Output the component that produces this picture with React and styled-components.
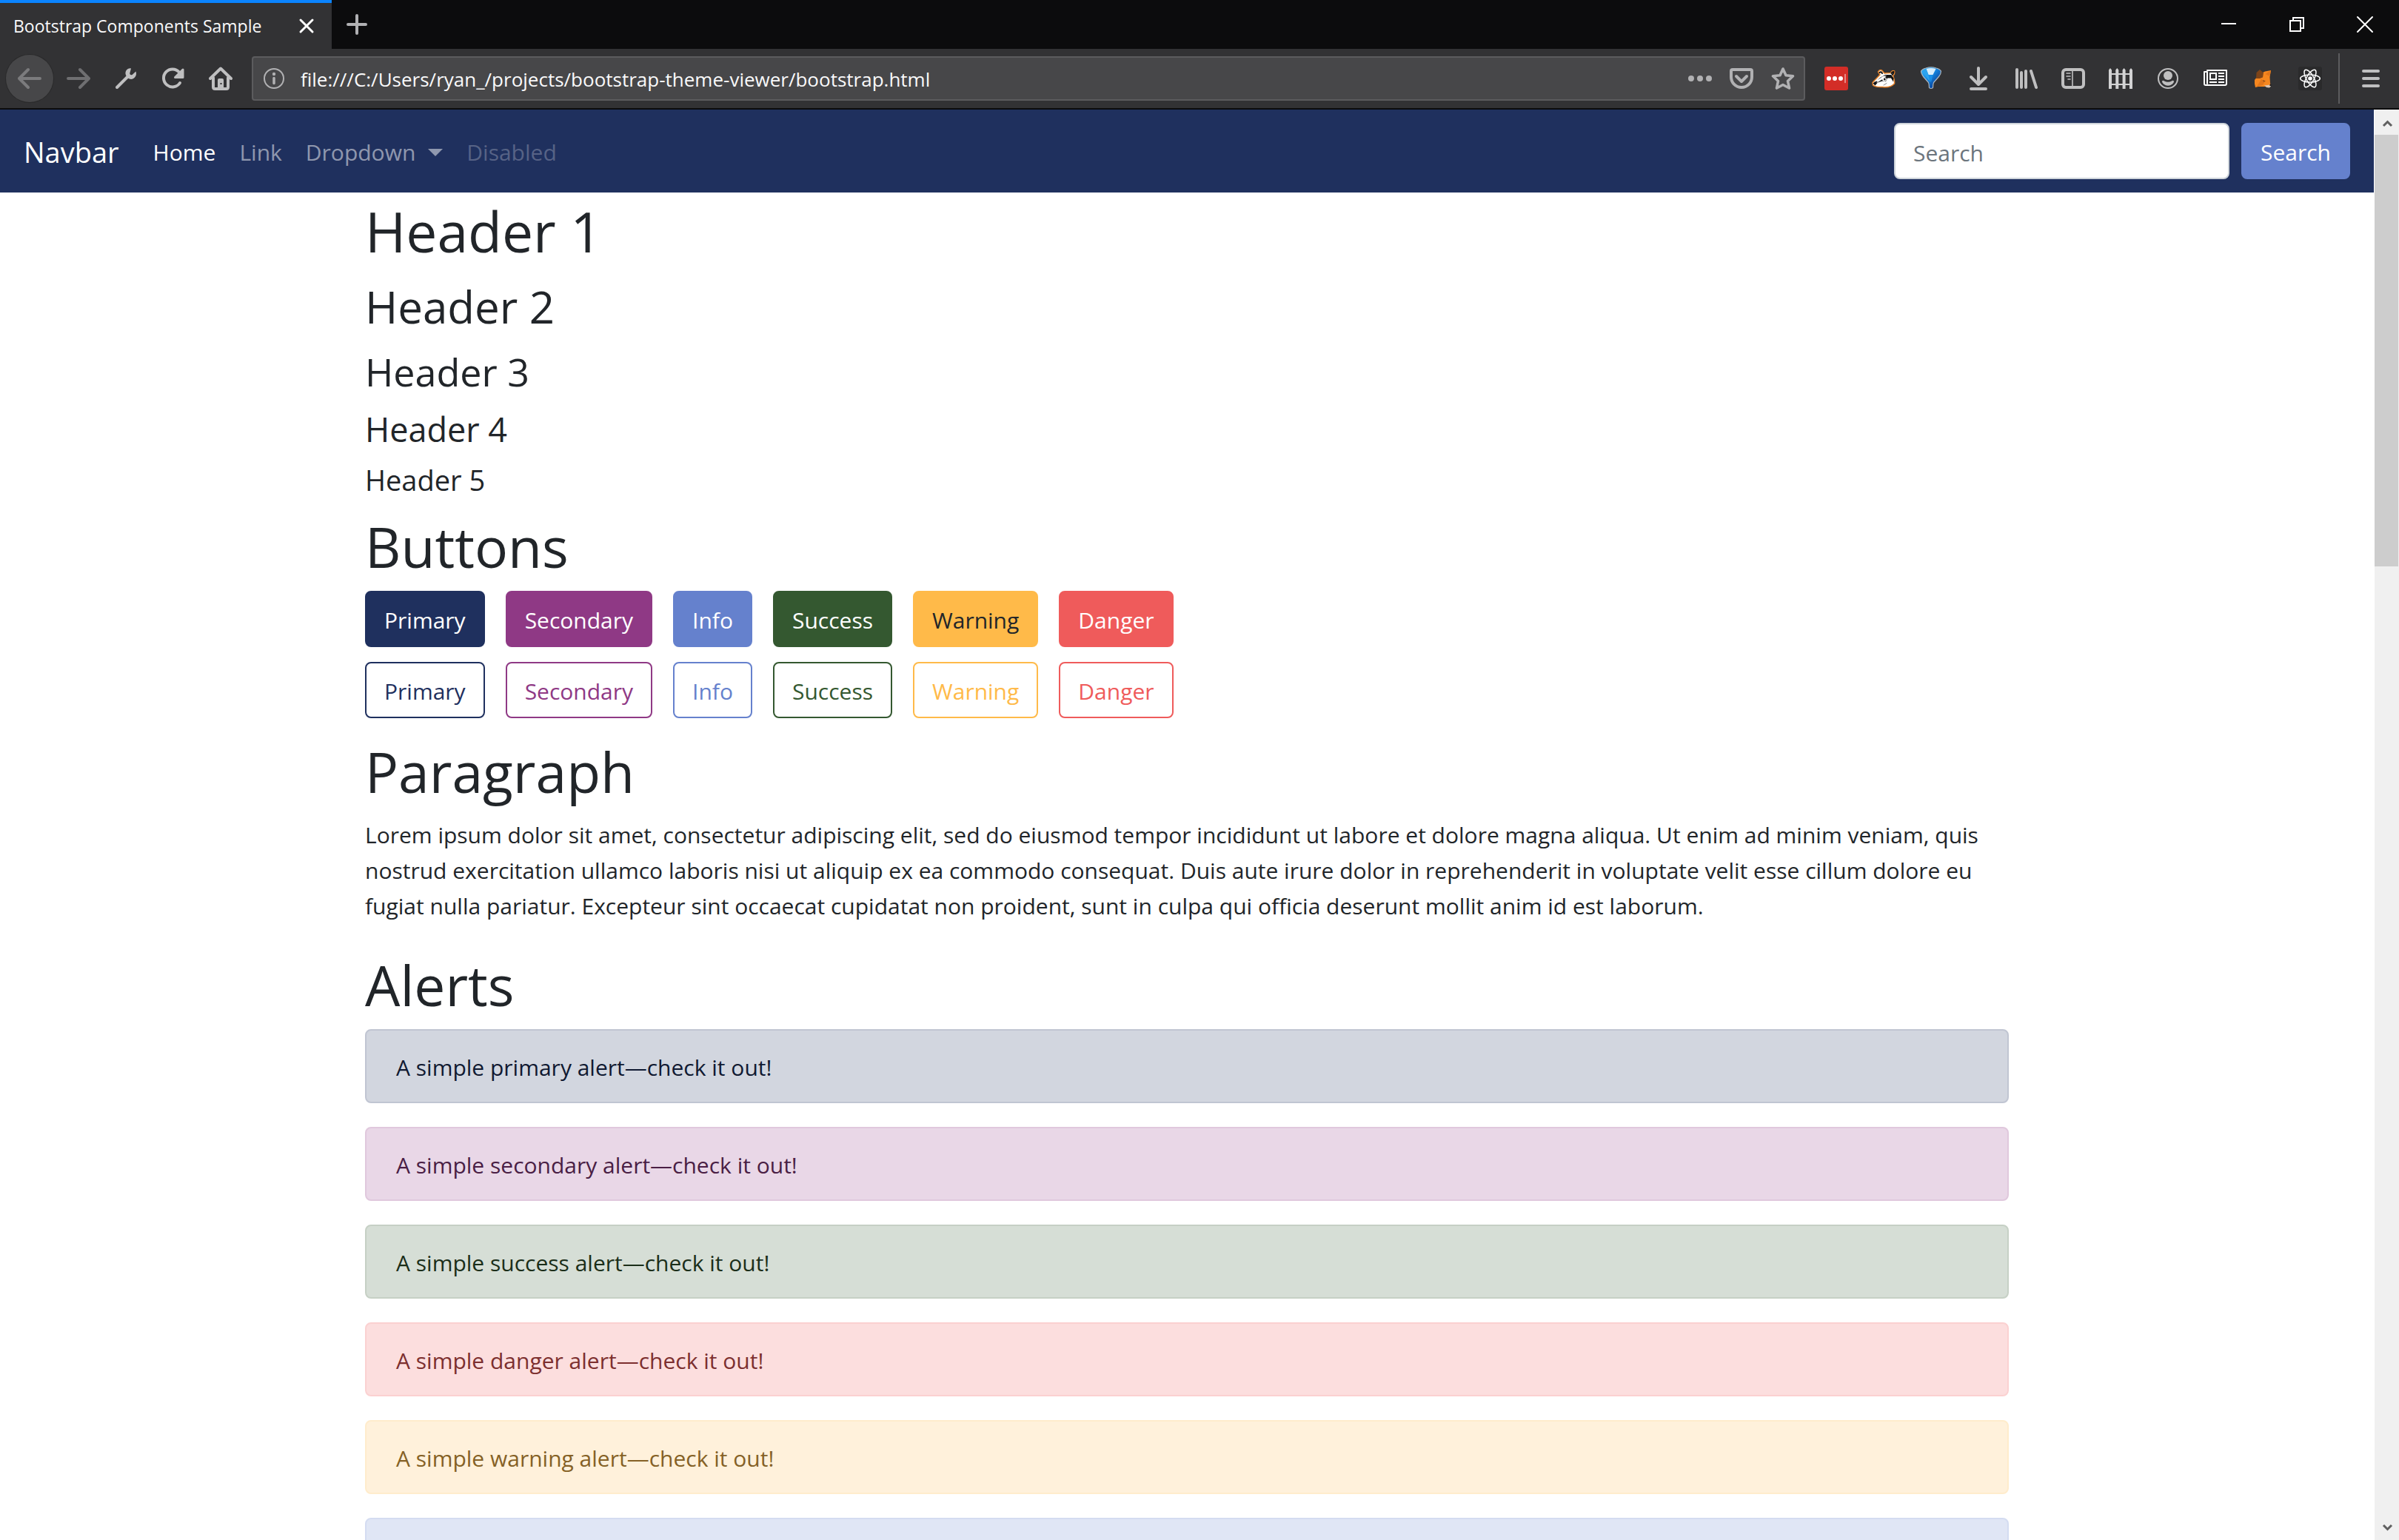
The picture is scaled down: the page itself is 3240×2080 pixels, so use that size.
import React from 'react';
import styled, { createGlobalStyle } from 'styled-components';

const FONT = '"Open Sans", "Noto Sans", sans-serif';

const theme = {
  primary: { color: '#1f305e', text: '#ffffff', alertBg: '#d2d6df', alertBorder: '#c0c5d2', alertText: '#101931' },
  secondary: { color: '#8f3985', text: '#ffffff', alertBg: '#e9d7e7', alertBorder: '#e0c8dd', alertText: '#4a1e45' },
  info: { color: '#6581cd', text: '#ffffff', alertBg: '#e0e6f5', alertBorder: '#d4dcf1', alertText: '#35436b' },
  success: { color: '#345830', text: '#ffffff', alertBg: '#d6ded6', alertBorder: '#c6d0c5', alertText: '#1b2e19' },
  warning: { color: '#ffba49', text: '#212529', alertBg: '#fff1db', alertBorder: '#ffeccc', alertText: '#856126' },
  danger: { color: '#ef5b5b', text: '#ffffff', alertBg: '#fcdede', alertBorder: '#fbd1d1', alertText: '#7c2f2f' },
};

const GlobalStyle = createGlobalStyle`
  *, *::before, *::after { box-sizing: border-box; }
  body {
    margin: 0;
    font-family: ${FONT};
    font-size: 30px;
    line-height: 48px;
    color: #212529;
    background: #fff;
  }
  button, input { font-family: inherit; margin: 0; }
`;

/* ---------- browser window ---------- */

const BrowserWindow = styled.div`
  display: flex;
  flex-direction: column;
  height: 100vh;
  overflow: hidden;
`;

const TabStrip = styled.header`
  display: flex;
  align-items: stretch;
  height: 66px;
  flex: none;
  background: #0c0c0d;
`;

const Tab = styled.div`
  display: flex;
  align-items: center;
  justify-content: space-between;
  width: 448px;
  padding: 0 18px;
  border-top: 4px solid #0a84ff;
  background: #323234;
  color: #f9f9fa;
  font-size: 23px;
  line-height: 32px;
  white-space: nowrap;
`;

const ChromeButton = styled.button`
  display: flex;
  align-items: center;
  justify-content: center;
  flex: none;
  width: ${(p) => p.$width || 64}px;
  padding: 0;
  border: 0;
  background: transparent;
  color: ${(p) => p.$color || '#bfbfc0'};
`;

const WindowControls = styled.div`
  display: flex;
  margin-left: auto;
`;

const Toolbar = styled.div`
  display: flex;
  align-items: stretch;
  flex: none;
  height: 82px;
  padding: 0 6px 0 8px;
  background: #323234;
  border-bottom: 2px solid #0c0c0d;
`;

const BackButton = styled(ChromeButton)`
  align-self: center;
  height: 64px;
  margin-right: 2px;
  border-radius: 50%;
  background: #474749;
  box-shadow: 0 0 0 1px #2a2a2b;
`;

const UrlBar = styled.div`
  display: flex;
  align-items: stretch;
  flex: 1;
  height: 60px;
  margin: 10px 10px 0;
  border: 2px solid #5c5c5e;
  border-radius: 4px;
  background: #474749;
`;

const UrlInput = styled.input`
  flex: 1;
  min-width: 0;
  padding: 2px 8px 0;
  border: 0;
  background: transparent;
  color: #f9f9fa;
  font-size: 26px;
  line-height: 40px;
`;

const Separator = styled.div`
  width: 2px;
  height: 68px;
  margin: 6px 10px 0 6px;
  background: #5c5c5e;
`;

const Viewport = styled.div`
  display: flex;
  flex: 1;
  min-height: 0;
`;

const Page = styled.div`
  flex: 1;
  min-width: 0;
  overflow: hidden;
  background: #fff;
`;

const ScrollTrack = styled.div`
  display: flex;
  flex-direction: column;
  flex: none;
  width: 34px;
  border-left: 1px solid #fff;
  background: #f0f0f0;
`;

const ScrollButton = styled(ChromeButton)`
  width: 100%;
  height: 34px;
  color: #606060;
`;

const ScrollSpace = styled.div`
  display: grid;
  grid-template-rows: 5fr 11fr;
  flex: 1;
  padding-right: 1px;
`;

const ScrollThumb = styled.div`
  background: #cdcdcd;
`;

/* ---------- page ---------- */

const Navbar = styled.nav`
  display: flex;
  align-items: center;
  height: 112px;
  padding: 0 32px;
  background: ${theme.primary.color};
`;

const Brand = styled.a`
  margin-right: 30px;
  padding-top: 2px;
  color: #fff;
  font-size: 38px;
  line-height: 60px;
  text-decoration: none;
`;

const NavList = styled.ul`
  display: flex;
  margin: 0;
  padding: 4px 0 0;
  list-style: none;
`;

const linkOpacity = { active: 1, normal: 0.5, disabled: 0.25 };

const NavLink = styled.a`
  display: flex;
  align-items: center;
  padding: 16px;
  color: rgba(255, 255, 255, ${(p) => linkOpacity[p.$state]});
  text-decoration: none;
`;

const Caret = styled.span`
  margin-left: 17px;
  border: 10px solid transparent;
  border-top-color: currentColor;
  border-bottom: 0;
`;

const SearchForm = styled.form`
  display: flex;
  gap: 16px;
  margin-left: auto;
`;

const SearchInput = styled.input`
  width: 453px;
  height: 76px;
  padding: 4px 24px 0;
  border: 2px solid #ced4da;
  border-radius: 8px;
  background: #fff;
  color: #495057;
  font-size: 30px;
  line-height: 48px;
  &::placeholder { color: #6c757d; opacity: 1; }
`;

const Container = styled.main`
  max-width: 2280px;
  margin: 0 auto;
  padding: 0 30px;
`;

const headingSizes = {
  1: { size: 75, line: 104, gap: 8 },
  2: { size: 60, line: 85, gap: 8 },
  3: { size: 52, line: 73, gap: 10 },
  4: { size: 45, line: 64, gap: 10 },
  5: { size: 38, line: 52, gap: 12 },
};

const Heading = styled.h1`
  margin: 0 0 ${(p) => headingSizes[p.$level].gap}px;
  font-size: ${(p) => headingSizes[p.$level].size}px;
  line-height: ${(p) => headingSizes[p.$level].line}px;
  font-weight: 400;
`;

const ButtonRow = styled.div`
  display: flex;
  gap: 28px;
  margin-bottom: 20px;
`;

const Button = styled.button`
  padding: 14px 24px 10px;
  border: 2px solid ${(p) => theme[p.$variant].color};
  border-radius: 8px;
  background: ${(p) => (p.$outline ? 'transparent' : theme[p.$variant].color)};
  color: ${(p) => (p.$outline ? theme[p.$variant].color : theme[p.$variant].text)};
  font-size: 30px;
  line-height: 48px;
`;

const Paragraph = styled.p`
  margin: 0 0 30px;
  padding-top: 2px;
`;

const Alert = styled.div`
  min-height: 100px;
  margin-bottom: 32px;
  padding: 26px 40px 22px;
  border: 2px solid ${(p) => theme[p.$variant].alertBorder};
  border-radius: 8px;
  background: ${(p) => theme[p.$variant].alertBg};
  color: ${(p) => theme[p.$variant].alertText};
`;

/* ---------- icons ---------- */

const Icon = ({ children, size = 32 }) => (
  <svg width={size} height={size} viewBox="0 0 32 32" fill="none" stroke="currentColor"
    strokeWidth="4" strokeLinecap="round" strokeLinejoin="round" aria-hidden="true">
    {children}
  </svg>
);

const TabCloseIcon = () => (
  <Icon><path d="M8 8l16 16M24 8L8 24" strokeWidth="3" /></Icon>
);
const PlusIcon = () => (
  <Icon><path d="M16 4v24M4 16h24" /></Icon>
);
const MinimizeIcon = () => (
  <Icon><path d="M6 15h20" strokeWidth="2" strokeLinecap="butt" /></Icon>
);
const RestoreIcon = () => (
  <Icon><path d="M7 11h14v14H7zM11 11V7h14v14h-4" strokeWidth="2" strokeLinecap="butt" strokeLinejoin="miter" /></Icon>
);
const CloseIcon = () => (
  <Icon><path d="M6 6l20 20M26 6L6 26" strokeWidth="2" /></Icon>
);
const BackIcon = () => (
  <Icon><path d="M2 16h28M14 4L2 16l12 12" /></Icon>
);
const ForwardIcon = () => (
  <Icon><path d="M2 16h28M18 4l12 12-12 12" /></Icon>
);
const WrenchIcon = () => (
  <Icon>
    <path d="M4 28L18 14" />
    <path d="M23 2.5c-5-1-9 4-7 9 2 6 9 7 12 3 2-2 2.500-5 1.500-8l-5 4.500c-2 1-4-1-3-3z" fill="currentColor" stroke="none" />
  </Icon>
);
const ReloadIcon = () => (
  <Icon>
    <path d="M25 22a12 12 0 1 1-1-14.500" />
    <path d="M29 4v10.500H18.500z" fill="currentColor" strokeWidth="3" />
  </Icon>
);
const HomeIcon = () => (
  <Icon>
    <path d="M2 16L16 2.500 30 16M6 15v12.500q0 2.500 2.500 2.500h15q2.500 0 2.500-2.500V15" />
    <path d="M12 31V18q0-2 2-2h4q2 0 2 2v13z" fill="currentColor" stroke="none" />
    <rect x="15.500" y="22" width="2" height="2" fill="#323234" stroke="none" />
  </Icon>
);
const InfoIcon = () => (
  <Icon>
    <circle cx="16" cy="16" r="13" strokeWidth="2" />
    <circle cx="16" cy="10" r="2.200" fill="currentColor" stroke="none" />
    <path d="M16 15.500v7" strokeWidth="3.500" />
  </Icon>
);
const DotsIcon = () => (
  <Icon>
    <g fill="currentColor" stroke="none">
      <circle cx="4" cy="16" r="4" /><circle cx="16" cy="16" r="4" /><circle cx="28" cy="16" r="4" />
    </g>
  </Icon>
);
const PocketIcon = () => (
  <Icon><path d="M4 4h24a2 2 0 0 1 2 2v8a14 14 0 0 1-28 0V6a2 2 0 0 1 2-2zM9 13l7 7 7-7" /></Icon>
);
const StarIcon = () => (
  <Icon><path d="M16 3l4 8.800 9.500 1L22.500 19.500l2 9.500L16 24.500 7.500 29l2-9.500L2.500 12.800l9.500-1z" strokeWidth="3.600" /></Icon>
);
const PasswordIcon = () => (
  <Icon>
    <rect width="32" height="32" rx="3" fill="#d32d27" stroke="none" />
    <g fill="#fff" stroke="none"><circle cx="6" cy="16" r="3" /><circle cx="14" cy="16" r="3" /><circle cx="22" cy="16" r="3" /></g>
    <path d="M28 10.500v11" stroke="#f0a9a5" strokeWidth="1.500" />
  </Icon>
);
const BadgerIcon = () => (
  <Icon>
    <path d="M1 21.500L11 11 8.500 7q2-3.500 5-2l3.500 4 8.500-.500q1.500-4 5-2.500 1 4-2 6 2.500 6 2 11-6 6-16 4.500Q5 28 1.500 25z" fill="#fff" stroke="#e8832a" strokeWidth="1.500" />
    <path d="M1.500 22.500l3-2.500 3 2-3 3.500zM5 20.500l6-5.500 7-4 8 0 3.500 4.500-.500 5-3-5-5 0-2 4.500-5-.500-6 2z" fill="#141414" stroke="none" />
    <path d="M6 19l9-6 5-1-4 4-8 5z" fill="#fff" stroke="none" />
    <path d="M10.500 8q2-2 3.500 1M26.500 9q1-2.500 3-2-.500 3-2 4" stroke="#141414" strokeWidth="2" />
    <circle cx="17" cy="17" r="2.800" fill="#fff" stroke="none" />
    <circle cx="17.300" cy="17" r="1.400" fill="#141414" stroke="none" />
    <path d="M16 25l4-2.500" stroke="#8b8b8b" strokeWidth="1" />
  </Icon>
);
const FunnelIcon = () => (
  <Icon>
    <defs>
      <linearGradient id="balloon" x1="0" y1="0" x2="1" y2="1">
        <stop offset="0" stopColor="#35b4f4" />
        <stop offset=".45" stopColor="#1283de" />
        <stop offset=".8" stopColor="#0a3f96" />
      </linearGradient>
    </defs>
    <path d="M2.500 6Q4 3.500 9 2 16-.500 23 2 28 3.500 29.500 6q0 4-3 7.500l-7 8q-1 2-1 7-2.500 2-5 0 0-5-1-7L5.500 13.500Q2.500 9 2.500 6z" fill="url(#balloon)" stroke="#aab4bd" strokeWidth="1.200" />
    <path d="M9.500 3q6.500-2 13 0l-4 8h-6z" fill="#d9eefb" stroke="none" />
    <path d="M3.500 6.500L9.500 3l3 8 2.500 10z" fill="#2ba3ee" stroke="none" />
    <path d="M12.500 11h6L16 21z" fill="#1a8fe6" stroke="none" />
  </Icon>
);
const DownloadIcon = () => (
  <Icon><path d="M16 2v20M6 14l10 10 10-10M6 30h20" /></Icon>
);
const LibraryIcon = () => (
  <Icon><path d="M4 4v24M10 8v20M16 6v22M23 6l7 22" /></Icon>
);
const SidebarIcon = () => (
  <Icon>
    <rect x="2" y="4" width="28" height="24" rx="4" />
    <path d="M15 4v24M7 9h5M7 13h5M9 17h3" strokeWidth="1.600" />
  </Icon>
);
const FenceIcon = () => (
  <Icon>
    <path d="M0 10h32M0 24h32" strokeWidth="2" strokeLinecap="butt" />
    <path d="M0 30V4.500L2 2l2 2.500V30zM9.300 30V4.500l2-2.500 2 2.500V30zM18.600 30V4.500l2-2.500 2 2.500V30zM28 30V4.500L30 2l2 2.500V30z" fill="currentColor" stroke="none" />
  </Icon>
);
const AccountIcon = () => (
  <Icon>
    <circle cx="16" cy="16" r="13" strokeWidth="2" />
    <circle cx="16" cy="12" r="6" fill="currentColor" stroke="none" />
    <path d="M8 19.500q1.500-1.500 3 0 5 2.500 10 0 1.500-1.500 3 0 .500 1.500-2 4-6 4.500-12 0-2.500-2.500-2-4z" fill="currentColor" stroke="none" />
  </Icon>
);
const NewsIcon = () => (
  <Icon>
    <path d="M5 5h26v18q0 2-2 2H3q-2 0-2-2V7h4v16" strokeWidth="2" />
    <path d="M9 9h8v8H9z" strokeWidth="2" strokeLinejoin="miter" />
    <path d="M20 9h8M20 13h8M20 17h8M8 21h10M20 21h8" strokeWidth="1.800" strokeLinecap="butt" />
  </Icon>
);
const FoxIcon = () => (
  <Icon>
    <g stroke="none">
      <path d="M5 18l3-4 8-6 3-1.500L27 5l-1.500 9 .500 8 .500 4-8.500 1H10l-4 1-1-5z" fill="#f6871f" />
      <path d="M7 16l.500-8L12 4l5 4.500-1 6-4 1.500z" fill="#7c4419" />
      <path d="M27 5l-7.500 5 6 3zM14 17l5 3-3 5-8 2z" fill="#e2761b" />
      <path d="M16 18l4 1.500-3 1z" fill="#8a4a1a" />
      <path d="M18 25.500l8-1 1 2-2 2-4-.500z" fill="#d8c4b4" />
      <path d="M25.500 24h2l-.500 2h-1.500z" fill="#161616" />
    </g>
  </Icon>
);
const ReactIcon = () => (
  <Icon>
    <rect width="32" height="32" rx="3" fill="#2a2a2b" stroke="none" />
    <g stroke="#fff" strokeWidth="1.500">
      <ellipse cx="16" cy="16" rx="13.300" ry="5" />
      <ellipse cx="16" cy="16" rx="13.300" ry="5" transform="rotate(60 16 16)" />
      <ellipse cx="16" cy="16" rx="13.300" ry="5" transform="rotate(120 16 16)" />
    </g>
    <circle cx="16" cy="16" r="2.800" fill="#fff" stroke="none" />
  </Icon>
);
const MenuIcon = () => (
  <Icon><path d="M6 6h20M6 16h20M6 26h20" /></Icon>
);
const ChevronUpIcon = () => (
  <Icon><path d="M11 21l5.500-5.500L22 21" strokeWidth="3" strokeLinecap="butt" strokeLinejoin="miter" /></Icon>
);
const ChevronDownIcon = () => (
  <Icon><path d="M11 13l5.500 5.500L22 13" strokeWidth="3" strokeLinecap="butt" strokeLinejoin="miter" /></Icon>
);

/* ---------- data ---------- */

const extensions = [
  ['Password manager', PasswordIcon],
  ['Privacy badger', BadgerIcon],
  ['Balloon', FunnelIcon],
  ['Downloads', DownloadIcon],
  ['Library', LibraryIcon],
  ['Sidebars', SidebarIcon],
  ['Containers', FenceIcon, '#d2d2d3'],
  ['Account', AccountIcon],
  ['Reader', NewsIcon, '#ffffff'],
  ['Wallet', FoxIcon],
  ['Developer tools', ReactIcon],
];

const buttons = [
  ['primary', 'Primary'],
  ['secondary', 'Secondary'],
  ['info', 'Info'],
  ['success', 'Success'],
  ['warning', 'Warning'],
  ['danger', 'Danger'],
];

const alerts = ['primary', 'secondary', 'success', 'danger', 'warning'];

export default function App() {
  return (
    <BrowserWindow>
      <GlobalStyle />
      <TabStrip>
        <Tab>
          Bootstrap Components Sample
          <ChromeButton $width={32} $color="#ffffff" aria-label="Close tab"><TabCloseIcon /></ChromeButton>
        </Tab>
        <ChromeButton $width={68} $color="#b1b1b3" aria-label="New tab"><PlusIcon /></ChromeButton>
        <WindowControls>
          <ChromeButton $width={92} $color="#ffffff" aria-label="Minimize"><MinimizeIcon /></ChromeButton>
          <ChromeButton $width={92} $color="#ffffff" aria-label="Restore"><RestoreIcon /></ChromeButton>
          <ChromeButton $width={92} $color="#ffffff" aria-label="Close"><CloseIcon /></ChromeButton>
        </WindowControls>
      </TabStrip>

      <Toolbar>
        <BackButton $color="#7b7b7d" aria-label="Back"><BackIcon /></BackButton>
        <ChromeButton $color="#6f6f71" aria-label="Forward"><ForwardIcon /></ChromeButton>
        <ChromeButton aria-label="Developer"><WrenchIcon /></ChromeButton>
        <ChromeButton aria-label="Reload"><ReloadIcon /></ChromeButton>
        <ChromeButton aria-label="Home"><HomeIcon /></ChromeButton>
        <UrlBar>
          <ChromeButton $color="#b1b1b3" $width={56} aria-label="Site information"><InfoIcon /></ChromeButton>
          <UrlInput aria-label="Address" readOnly
            value="file:///C:/Users/ryan_/projects/bootstrap-theme-viewer/bootstrap.html" />
          <ChromeButton $color="#b1b1b3" $width={56} aria-label="Page actions"><DotsIcon /></ChromeButton>
          <ChromeButton $color="#b1b1b3" $width={56} aria-label="Save to Pocket"><PocketIcon /></ChromeButton>
          <ChromeButton $color="#b1b1b3" $width={56} aria-label="Bookmark"><StarIcon /></ChromeButton>
        </UrlBar>
        {extensions.map(([label, Glyph, color]) => (
          <ChromeButton key={label} $color={color} aria-label={label}><Glyph /></ChromeButton>
        ))}
        <Separator />
        <ChromeButton aria-label="Menu"><MenuIcon /></ChromeButton>
      </Toolbar>

      <Viewport>
        <Page>
          <Navbar>
            <Brand href="#">Navbar</Brand>
            <NavList>
              <li><NavLink $state="active" href="#">Home</NavLink></li>
              <li><NavLink $state="normal" href="#">Link</NavLink></li>
              <li><NavLink $state="normal" href="#">Dropdown<Caret /></NavLink></li>
              <li><NavLink $state="disabled" href="#" aria-disabled="true">Disabled</NavLink></li>
            </NavList>
            <SearchForm>
              <SearchInput type="search" placeholder="Search" aria-label="Search" />
              <Button $variant="info" type="button">Search</Button>
            </SearchForm>
          </Navbar>

          <Container>
            {[1, 2, 3, 4, 5].map((level) => (
              <Heading key={level} as={`h${level}`} $level={level}>Header {level}</Heading>
            ))}

            <Heading $level={1}>Buttons</Heading>
            <ButtonRow>
              {buttons.map(([variant, label]) => (
                <Button key={variant} $variant={variant} type="button">{label}</Button>
              ))}
            </ButtonRow>
            <ButtonRow>
              {buttons.map(([variant, label]) => (
                <Button key={variant} $variant={variant} $outline type="button">{label}</Button>
              ))}
            </ButtonRow>

            <Heading $level={1}>Paragraph</Heading>
            <Paragraph>
              Lorem ipsum dolor sit amet, consectetur adipiscing elit, sed do eiusmod tempor incididunt ut labore et
              dolore magna aliqua. Ut enim ad minim veniam, quis nostrud exercitation ullamco laboris nisi ut aliquip ex
              ea commodo consequat. Duis aute irure dolor in reprehenderit in voluptate velit esse cillum dolore eu
              fugiat nulla pariatur. Excepteur sint occaecat cupidatat non proident, sunt in culpa qui officia deserunt
              mollit anim id est laborum.
            </Paragraph>

            <Heading $level={1}>Alerts</Heading>
            {alerts.map((variant) => (
              <Alert key={variant} $variant={variant} role="alert">
                A simple {variant} alert—check it out!
              </Alert>
            ))}
            <Alert $variant="info" />
          </Container>
        </Page>

        <ScrollTrack>
          <ScrollButton aria-label="Scroll up"><ChevronUpIcon /></ScrollButton>
          <ScrollSpace><ScrollThumb /></ScrollSpace>
          <ScrollButton aria-label="Scroll down"><ChevronDownIcon /></ScrollButton>
        </ScrollTrack>
      </Viewport>
    </BrowserWindow>
  );
}
